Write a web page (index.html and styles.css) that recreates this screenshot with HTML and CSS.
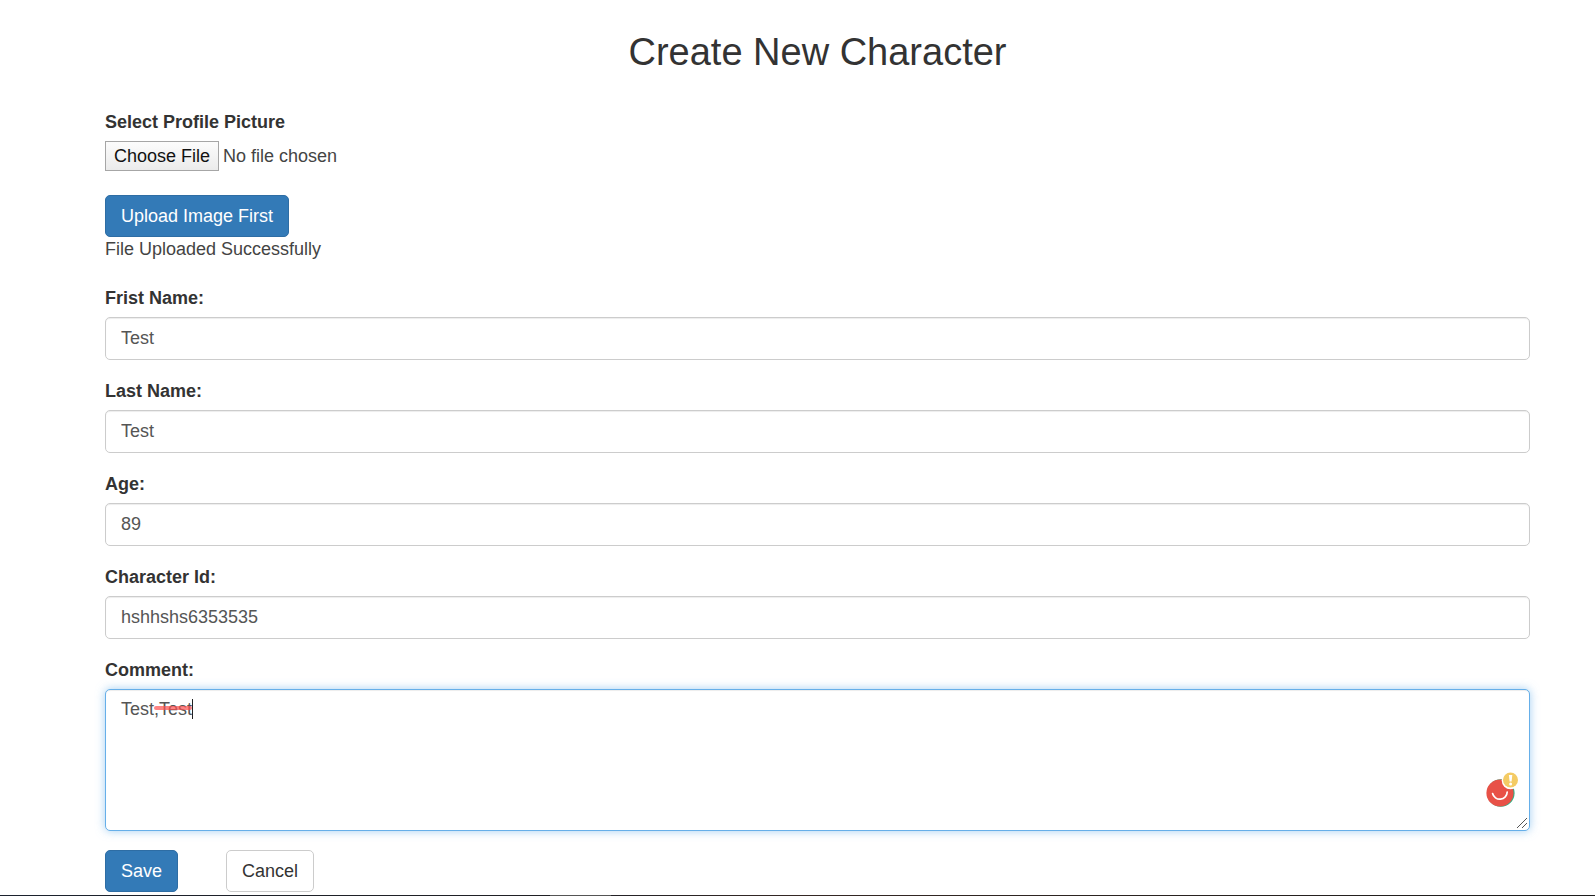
FILE: index.html
```html
<!DOCTYPE html>
<html lang="en">
<head>
<meta charset="utf-8">
<title>Create New Character</title>
<link rel="stylesheet" href="styles.css">
</head>
<body>
<main class="container">
  <h2 class="title">Create New Character</h2>
  <form class="form">
    <div class="upload">
      <label class="label" for="picture">Select Profile Picture</label>
      <input class="file" type="file" id="picture">
      <button class="btn btn-primary" type="button">Upload Image First</button>
      <div class="status">File Uploaded Successfully</div>
    </div>
    <div class="group">
      <label class="label" for="first">Frist Name:</label>
      <input class="control" type="text" id="first" value="Test">
    </div>
    <div class="group">
      <label class="label" for="last">Last Name:</label>
      <input class="control" type="text" id="last" value="Test">
    </div>
    <div class="group">
      <label class="label" for="age">Age:</label>
      <input class="control" type="text" id="age" value="89">
    </div>
    <div class="group">
      <label class="label" for="charid">Character Id:</label>
      <input class="control" type="text" id="charid" value="hshhshs6353535">
    </div>
    <div class="group">
      <label class="label" for="comment">Comment:</label>
      <div class="comment">
        <textarea class="control area" id="comment" rows="5" spellcheck="false">Test,Test</textarea>
        <span class="strike"></span>
        <span class="caret"></span>
        <svg class="checker" width="36" height="36" viewBox="0 0 36 36" aria-hidden="true">
          <circle cx="15.800" cy="21" r="13.800" fill="#23b387"/>
          <circle cx="15" cy="21" r="13.600" fill="#e85147"/>
          <path d="M7.600 21.500a7.400 7.400 0 0 0 14.600-1.500" fill="none" stroke="#fff" stroke-width="1.700" stroke-linecap="round"/>
          <circle cx="25.500" cy="8.500" r="8.800" fill="#fff"/>
          <circle cx="25.500" cy="8" r="7.500" fill="#f4cb64"/>
          <path d="M23.900 3h3.400l-.7 6.500h-2z" fill="#fff"/>
          <circle cx="25.600" cy="12" r="1.500" fill="#fff"/>
        </svg>
        <svg class="grip" width="12" height="12" viewBox="0 0 12 12" aria-hidden="true">
          <path d="M1 11L11 1M6 11L11 6" stroke="#555" stroke-width="1"/>
        </svg>
      </div>
    </div>
    <div class="actions">
      <button class="btn btn-primary" type="submit">Save</button>
      <button class="btn btn-default" type="button">Cancel</button>
    </div>
  </form>
</main>
<footer class="edge"></footer>
</body>
</html>
```
FILE: styles.css
```css
* { box-sizing: border-box; }

body {
  margin: 0;
  min-height: 100vh;
  display: flex;
  flex-direction: column;
  background: #fff;
  color: #333;
  font: 18px/25px "Liberation Sans", Arial, sans-serif;
}

.container {
  flex: 1;
  padding: 31px 65px 2px 105px;
}

.title {
  margin: 0 0 37px;
  font-size: 38px;
  line-height: 42px;
  font-weight: 400;
  text-align: center;
}

.label {
  display: block;
  margin-bottom: 6px;
  line-height: 25px;
  font-weight: 700;
}

.upload { margin-bottom: 24px; }

.status { color: #444; }

.file {
  display: block;
  margin-bottom: 24px;
  height: 30px;
  font: inherit;
  color: #444;
}

.file::file-selector-button {
  height: 30px;
  margin: 0 4px 0 0;
  padding: 0 8px;
  border: 1px solid #a6a6a6;
  border-radius: 0;
  background: linear-gradient(#fcfcfc, #ebebeb);
  color: #111;
  font: inherit;
}

.btn {
  height: 42px;
  padding: 0 15px;
  border: 1px solid;
  border-radius: 5px;
  font: inherit;
}

.btn-primary {
  background: #337ab7;
  border-color: #2e6da4;
  color: #fff;
}

.btn-default {
  background: #fff;
  border-color: #ccc;
  color: #333;
}

.upload .btn { display: block; }

.group { margin-bottom: 19px; }

.control {
  display: block;
  width: 100%;
  height: 43px;
  padding: 0 15px;
  border: 1px solid #ccc;
  border-radius: 5px;
  background: #fff;
  box-shadow: inset 0 1px 1px rgba(0, 0, 0, 0.075);
  color: #555;
  font: inherit;
  outline: 0;
}

.comment { position: relative; }

.area {
  height: 142px;
  padding: 7px 15px;
  border-color: #66afe9;
  box-shadow: inset 0 1px 1px rgba(0, 0, 0, 0.075), 0 0 10px rgba(102, 175, 233, 0.6);
  resize: vertical;
}

.area::-webkit-resizer { background: transparent; }

.strike {
  position: absolute;
  top: 17px;
  left: 49px;
  width: 38px;
  height: 4px;
  border-radius: 2px;
  background: rgba(255, 80, 80, 0.7);
}

.caret {
  position: absolute;
  top: 10px;
  left: 87px;
  width: 1px;
  height: 20px;
  background: #222;
}

.checker {
  position: absolute;
  right: 9px;
  bottom: 23px;
}

.grip {
  position: absolute;
  right: 2px;
  bottom: 2px;
  pointer-events: none;
}

.actions {
  display: flex;
  gap: 48px;
}

.edge {
  height: 1px;
  background: linear-gradient(90deg, #1c222e, #202024 550px, #555 550px, #555 611px, #242226 611px, #352824 800px, #1c1c1c);
}
```
